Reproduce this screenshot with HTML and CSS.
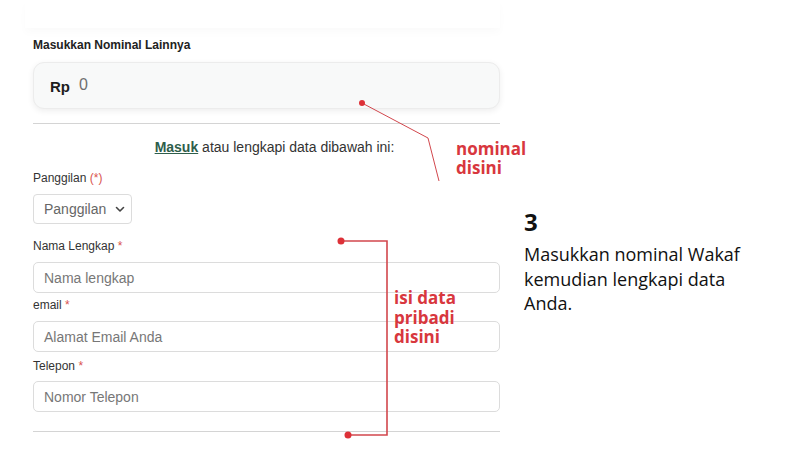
FILE: index.html
```html
<!DOCTYPE html>
<html lang="id">
<head>
  <meta charset="UTF-8">
  <title>Langkah 3 - Isi Nominal Wakaf</title>
  <link rel="stylesheet" href="styles.css">
</head>
<body>
  <div class="slide">
    <div class="form-shot">
      <div class="prev-card"></div>
      <div class="form-body">
        <div class="amount-label">Masukkan Nominal Lainnya</div>
        <div class="amount-box">
          <span class="currency">Rp</span>
          <span class="amount">0</span>
        </div>

        <hr class="divider">

        <p class="login-hint"><a href="#">Masuk</a> atau lengkapi data dibawah ini:</p>

        <label class="field-label">Panggilan <span class="req">(*)</span></label>
        <div class="select-box">
          <span>Panggilan</span>
          <svg width="10" height="7" viewBox="0 0 10 7"><path d="M1.5 1.5 L5 5 L8.5 1.5" fill="none" stroke="#444" stroke-width="1.6" stroke-linecap="round" stroke-linejoin="round"/></svg>
        </div>

        <label class="field-label first">Nama Lengkap <span class="req">*</span></label>
        <div class="text-input">Nama lengkap</div>

        <label class="field-label">email <span class="req">*</span></label>
        <div class="text-input">Alamat Email Anda</div>

        <label class="field-label tel">Telepon <span class="req">*</span></label>
        <div class="text-input tel">Nomor Telepon</div>

        <hr class="divider bottom">
      </div>
    </div>

    <div class="step">
      <div class="step-num">3</div>
      <p class="step-text">Masukkan nominal Wakaf<br>kemudian lengkapi data<br>Anda.</p>
    </div>

    <!-- callouts drawn over the form -->
    <svg class="callouts" width="800" height="450" viewBox="0 0 800 450">
      <g fill="none" stroke="#d2474d">
        <path d="M362 103 L428 138 L439 181" stroke-width="1"/>
        <path d="M341 241 H387 V435 H348" stroke-width="1.6"/>
      </g>
      <g fill="#dd3138">
        <circle cx="362" cy="103" r="3"/>
        <circle cx="341" cy="241" r="3.5"/>
        <circle cx="348" cy="435" r="3.5"/>
      </g>
    </svg>
    <div class="note note-amount">nominal<br>disini</div>
    <div class="note note-data">isi data<br>pribadi<br>disini</div>
  </div>
</body>
</html>
```

FILE: styles.css
```css
html, body {
  margin: 0;
  background: #ffffff;
}

.slide {
  position: relative;
  width: 800px;
  height: 450px;
  overflow: hidden;
  display: flex;
}

/* left: form screenshot */
.form-shot {
  width: 510px;
  font-family: "Liberation Sans", Arial, sans-serif;
  color: #222;
}

.prev-card {
  height: 28px;
  margin: 0 10px 0 25px;
  background: #fff;
  box-shadow: 0 5px 8px rgba(0, 0, 0, 0.018);
}

.form-body {
  padding: 9px 10px 0 33px;
}

.amount-label {
  font-size: 12px;
  font-weight: bold;
  line-height: 16px;
}

.amount-box {
  margin-top: 9px;
  height: 45px;
  display: flex;
  align-items: center;
  padding-left: 16px;
  background: #f8f9f9;
  border: 1px solid #ececec;
  border-radius: 11px;
  box-shadow: 0 2px 6px rgba(0, 0, 0, 0.07);
}

.currency {
  font-size: 15px;
  font-weight: bold;
  color: #1d1d1d;
  margin-right: 9px;
  margin-top: 2px;
}

.amount {
  font-size: 16px;
  color: #6f6f6f;
  margin-top: -1px;
}

.divider {
  border: none;
  border-top: 1px solid #d4d4d4;
  margin: 14px 0 0;
}

.divider.bottom {
  margin-top: 19px;
}

.login-hint {
  margin: 14px 0 0;
  padding-left: 16px;
  text-align: center;
  font-size: 14px;
  line-height: 18px;
  color: #333;
}

.login-hint a {
  color: #2e5e4b;
  font-weight: bold;
}

.field-label {
  display: block;
  margin-top: 4px;
  font-size: 12px;
  line-height: 16px;
  color: #333;
}

.login-hint + .field-label {
  margin-top: 14px;
}

.field-label.first {
  margin-top: 14px;
}

.field-label.tel {
  margin-top: 6px;
}

.req {
  color: #d9534f;
}

.select-box {
  margin-top: 8px;
  width: 99px;
  height: 30px;
  display: flex;
  align-items: center;
  gap: 9px;
  padding: 0 0 0 10px;
  box-sizing: border-box;
  border: 1px solid #dcdcdc;
  border-radius: 4px;
  font-size: 14px;
  color: #666;
}

.text-input {
  margin-top: 8px;
  height: 29px;
  display: flex;
  align-items: center;
  padding-left: 10px;
  border: 1px solid #dcdcdc;
  border-radius: 5px;
  font-size: 14px;
  color: #777;
}

.text-input.tel {
  margin-top: 7px;
}

/* right: step description */
.step {
  padding: 207px 0 0 14px;
  font-family: "Open Sans", sans-serif;
  color: #111;
}

.step-num {
  font-size: 24px;
  font-weight: bold;
  line-height: 30px;
}

.step-text {
  margin: 5px 0 0;
  font-size: 18px;
  line-height: 24.5px;
}

/* annotations */
.callouts {
  position: absolute;
  left: 0;
  top: 0;
}

.note {
  position: absolute;
  font-family: "Open Sans", sans-serif;
  font-weight: bold;
  color: #d8373e;
}

.note-amount {
  left: 456px;
  top: 139px;
  font-size: 17px;
  line-height: 19px;
}

.note-data {
  left: 394px;
  top: 288px;
  font-size: 17px;
  line-height: 19.5px;
}
```
